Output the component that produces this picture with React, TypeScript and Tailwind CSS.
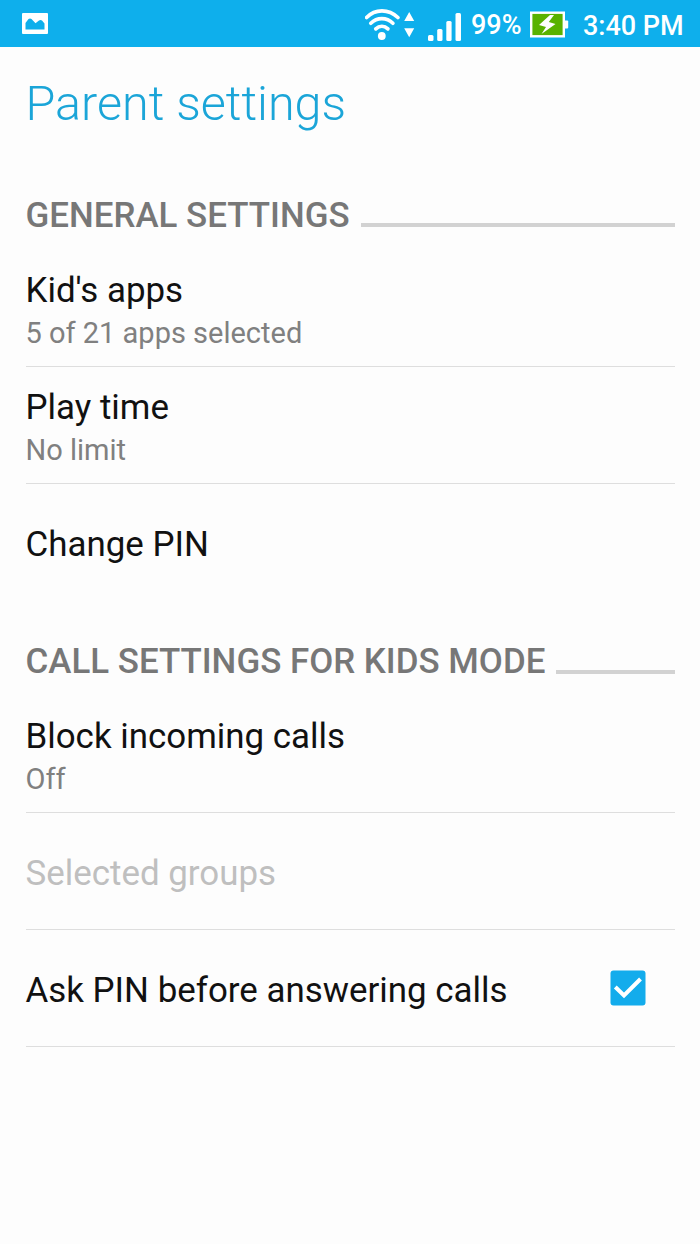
interface RowProps {
    title: string;
    summary?: string;
    disabled?: boolean;
    divider?: boolean;
    checked?: boolean;
}

const StatusBar = () => (
    <header className="flex h-[46.5px] items-center justify-between bg-[#0eafec] pl-[22px] pr-4 text-white">
        <svg className="mt-px h-[21px] w-[26px]" viewBox="0 0 26 21">
            <rect width="26" height="21" rx="1" fill="#fff" />
            <path d="M3.5 16.5V10L6.5 6Q8 4.8 9.5 6L13.5 10.3L17 7.5Q18.5 6.5 20 7.5L22.5 10.5V16.5Z" fill="#0eafec" />
        </svg>

        <div className="flex h-[46px] items-center">
            {/* wifi + data arrows */}
            <svg className="h-[46px] w-[52px]" viewBox="0 0 52 46">
                <g fill="none" stroke="#fff" strokeWidth="3.7" strokeLinecap="round">
                    <path d="M1.6 17.5C10.1 8.6 23.6 8.6 32.9 17.5" />
                    <path d="M5.8 23.2C12.1 17 21.6 17 27.9 23.2" />
                    <path d="M10.8 28.9C14.4 25.4 19.4 25.4 22.9 28.9" />
                </g>
                <circle cx="16.8" cy="36" r="3.9" fill="#fff" />
                <path d="M44.2 12L49.2 21H39.2ZM44.2 37.2L49.2 28.2H39.2Z" fill="#fff" />
            </svg>

            {/* signal strength */}
            <svg className="ml-[11px] h-[46px] w-[34px]" viewBox="0 0 34 46" fill="#fff">
                <rect x="0" y="35" width="5.5" height="6" rx="1.5" />
                <rect x="9.2" y="29" width="5.3" height="12" rx="1.5" />
                <rect x="18.3" y="21" width="5.3" height="20" rx="1.5" />
                <rect x="27.5" y="13" width="5.5" height="28" rx="1.5" />
            </svg>

            <span className="mt-[4px] ml-[9px] w-[52px] whitespace-nowrap text-[27px] leading-none font-medium">99%</span>

            {/* battery */}
            <svg className="ml-[7px] h-[46px] w-[39px]" viewBox="0 0 39 46">
                <rect x="34" y="20.5" width="4.2" height="8" rx="1" fill="#fff" />
                <rect x="1.2" y="12.7" width="32.6" height="23.6" fill="#59b200" stroke="#fff" strokeWidth="2.4" />
                <path d="M20 15L9 25L16 27L11.5 34L25.5 24L18.8 22L24 15Z" fill="#fff" />
            </svg>

            <span className="mt-[6px] ml-[14px] w-[101px] whitespace-nowrap text-[27px] leading-none font-medium">3:40 PM</span>
        </div>
    </header>
);

const SectionHeader = ({ label }: { label: string }) => (
    <div className="flex h-[42px] items-start">
        <h2 className="whitespace-nowrap text-[34.9px] leading-[42px] font-medium text-[#777]">{label}</h2>
        <span className="mt-[28.5px] ml-[11px] h-1 flex-1 bg-[#d2d2d2]" />
    </div>
);

const Row = ({ title, summary, disabled = false, divider = true, checked }: RowProps) => (
    <div className={`flex h-[117.3px] items-center border-b ${divider ? 'border-[#dedede]' : 'border-transparent'}`}>
        <div className="flex-1 pt-[5.5px]">
            <div className={`text-[34.9px] leading-[42px] ${disabled ? 'text-[#bfbfbf]' : 'text-[#111]'}`}>{title}</div>
            {summary && <div className="mt-[3.3px] text-[29px] leading-[36px] text-[#808080]">{summary}</div>}
        </div>
        {checked && (
            <svg className="mr-[29px] h-9 w-9" viewBox="0 0 36 36">
                <rect x="0.5" y="0.5" width="35" height="35" rx="3" fill="#13acec" />
                <path d="M5.3 17L14 25.5L30.5 9" fill="none" stroke="#fff" strokeWidth="4" />
            </svg>
        )}
    </div>
);

export default function App() {
    return (
        <div className="h-[1244px] w-[700px] overflow-hidden bg-[#fdfdfd] font-['Roboto',sans-serif]">
            <StatusBar />
            <main className="px-[25.5px]">
                <h1 className="pt-[28.4px] text-[48.5px] leading-[58px] font-light text-[#1ba5d8]">Parent settings</h1>

                <section className="mt-[62px]">
                    <SectionHeader label="GENERAL SETTINGS" />
                    <div className="mt-[12.6px]">
                        <Row title="Kid's apps" summary="5 of 21 apps selected" />
                        <Row title="Play time" summary="No limit" />
                        <Row title="Change PIN" divider={false} />
                    </div>
                </section>

                <section className="mt-10">
                    <SectionHeader label="CALL SETTINGS FOR KIDS MODE" />
                    <div className="mt-3">
                        <Row title="Block incoming calls" summary="Off" />
                        <Row title="Selected groups" disabled />
                        <Row title="Ask PIN before answering calls" checked />
                    </div>
                </section>
            </main>
        </div>
    );
}
